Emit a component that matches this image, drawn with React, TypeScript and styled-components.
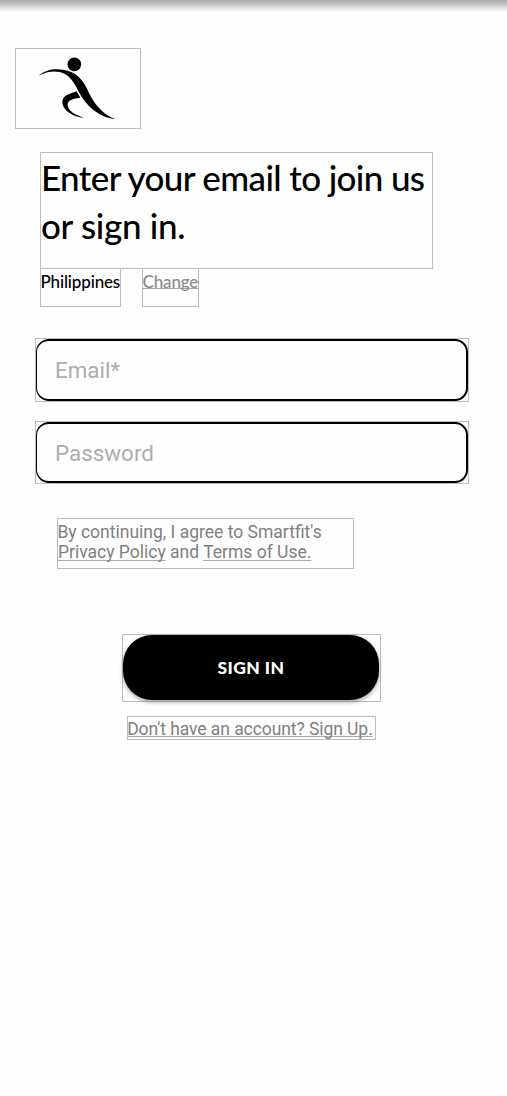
import React from "react";
import styled, { createGlobalStyle } from "styled-components";

const GlobalStyle = createGlobalStyle`
  * { box-sizing: border-box; }
  body { margin: 0; background: #fefefe; }
`;

const Screen = styled.main`
  width: 507px;
  height: 1096px;
  overflow: hidden;
  background: #fefefe;
  font-family: Roboto, sans-serif;
  color: #808080;
`;

const TopShade = styled.div`
  height: 13px;
  background: linear-gradient(#acacac, #c4c4c4 35%, #eeeeee 75%, #fefefe);
`;

const Outline = styled.div`
  border: 1px solid #bdbdbd;
`;

const LogoBox = styled(Outline)`
  width: 126px;
  height: 81px;
  margin: 35px 0 0 15px;
  svg { display: block; }
`;

const Title = styled.h1`
  width: 393px;
  height: 117px;
  margin: 23px 0 0 40px;
  border: 1px solid #bdbdbd;
  font: 500 35px/48px Lato, sans-serif;
  color: #000;
  white-space: nowrap;
`;

const Line = styled.span<{ $track: number }>`
  display: block;
  letter-spacing: ${(p) => p.$track}px;
`;

const Region = styled.div`
  display: flex;
  gap: 21px;
  margin: -1px 0 0 40px;
`;

const RegionItem = styled(Outline)<{ $width: number; $muted?: boolean }>`
  width: ${(p) => p.$width}px;
  height: 39px;
  font: 500 17px/25px Lato, sans-serif;
  letter-spacing: -0.15px;
  text-indent: -0.5px;
  white-space: nowrap;
  color: ${(p) => (p.$muted ? "#8a8a8a" : "#000")};
`;

const ChangeLabel = styled.span`
  display: block;
  height: 20px;
  border-bottom: 1px solid #a5a5a5;
`;

const Fields = styled.div`
  display: flex;
  flex-direction: column;
  gap: 19px;
  margin: 31px 0 0 35px;
`;

const FieldBox = styled(Outline)<{ $height: number }>`
  width: 434px;
  height: ${(p) => p.$height}px;
`;

const Input = styled.input`
  display: block;
  width: 432px;
  height: 100%;
  padding: 0 0 0 18px;
  border: 2px solid #000;
  border-left-width: 1px;
  border-radius: 13px;
  outline: none;
  background: #fefefe;
  font: 400 22.4px Roboto, sans-serif;
  &::placeholder { color: #adadad; opacity: 1; }
`;

const Terms = styled(Outline)`
  width: 297px;
  height: 51px;
  margin: 34px 0 0 57px;
  padding-top: 3px;
  font-size: 17.5px;
  line-height: 20px;
  text-indent: -0.6px;
  white-space: nowrap;
`;

const Link = styled.a<{ $offset: number }>`
  text-decoration: underline;
  text-decoration-color: #aaa;
  text-decoration-thickness: 1px;
  text-underline-offset: ${(p) => p.$offset}px;
  text-decoration-skip-ink: none;
`;

const ButtonBox = styled(Outline)`
  width: 259px;
  height: 68px;
  margin: 65px 0 0 122px;
`;

const Button = styled.button`
  display: block;
  width: 256px;
  height: 65px;
  padding: 0;
  border: 0;
  border-radius: 29px;
  background: #000;
  box-shadow: 0 2px 4px rgba(0, 0, 0, 0.35);
  color: #fff;
  font: 900 17.5px Lato, sans-serif;
  letter-spacing: 0.4px;
`;

const SignUp = styled(Outline)`
  width: 249px;
  height: 24px;
  margin: 14px 0 0 127px;
  padding-top: 1px;
  font-size: 17.5px;
  line-height: 23px;
  letter-spacing: -0.07px;
  text-indent: -0.8px;
  white-space: nowrap;
`;

const Logo = () => (
  <svg width="124" height="79" viewBox="48 147 372 237" aria-label="Smartfit">
    <circle cx="223" cy="193" r="20.5" />
    <path d="M116 227 C136 211 155 207 174 208 C216 209 243 229 260 264 C276 300 298 339 347 358 C300 351 271 327 249 296 C231 271 223 238 195 222 C172 210 142 213 116 227Z" />
    <path d="M230 274 L241 293 C218 296 202 300 203 315 C204 332 224 345 252 353 C221 352 187 331 187 306 C187 286 210 282 230 274Z" />
  </svg>
);

export default function App() {
  return (
    <>
      <GlobalStyle />
      <Screen>
        <TopShade />
        <LogoBox><Logo /></LogoBox>
        <Title>
          <Line $track={-0.63}>Enter your email to join us</Line>
          <Line $track={-0.3}>or sign in.</Line>
        </Title>
        <Region>
          <RegionItem $width={81}>Philippines</RegionItem>
          <RegionItem $width={57} $muted><ChangeLabel>Change</ChangeLabel></RegionItem>
        </Region>
        <Fields>
          <FieldBox $height={64}><Input placeholder="Email*" /></FieldBox>
          <FieldBox $height={63}><Input type="password" placeholder="Password" /></FieldBox>
        </Fields>
        <Terms>
          By continuing, I agree to Smartfit's<br />
          <Link $offset={2}>Privacy Policy</Link> and <Link $offset={2}>Terms of Use.</Link>
        </Terms>
        <ButtonBox><Button>SIGN IN</Button></ButtonBox>
        <SignUp><Link $offset={1}>Don't have an account? Sign Up.</Link></SignUp>
      </Screen>
    </>
  );
}
